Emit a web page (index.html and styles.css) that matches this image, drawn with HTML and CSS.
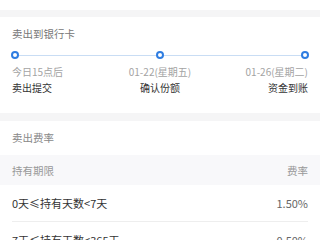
FILE: index.html
```html
<!DOCTYPE html>
<html>

<head>
    <meta name="viewport" content="width=device-width, initial-scale=1.0">
    <link rel="stylesheet" href="styles.css">
</head>

<body>
    <div class="topstrip"></div>

    <div class="card">
        <div class="card-title">卖出到银行卡</div>
        <div class="track">
            <span class="dot"></span>
            <span class="dot"></span>
            <span class="dot"></span>
        </div>
        <div class="steps dates">
            <span>今日15点后</span>
            <span>01-22(星期五)</span>
            <span>01-26(星期二)</span>
        </div>
        <div class="steps names">
            <span>卖出提交</span>
            <span>确认份额</span>
            <span>资金到账</span>
        </div>
    </div>

    <div class="fee">
        <div class="fee-title">卖出费率</div>
        <div class="fee-row fee-head">
            <span>持有期限</span>
            <span>费率</span>
        </div>
        <div class="fee-row">
            <span>0天≤持有天数&lt;7天</span>
            <span class="rate">1.50%</span>
        </div>
        <div class="fee-row">
            <span>7天≤持有天数&lt;365天</span>
            <span class="rate">0.50%</span>
        </div>
    </div>
</body>

</html>
```

FILE: styles.css
```css
* {
    box-sizing: border-box;
}

body {
    margin: 0;
    background-color: #f5f5f6;
    font-family: "Noto Sans CJK SC", "Noto Sans", sans-serif;
    color: #333;
}

.topstrip {
    height: 10px;
    background-color: #fff;
}

.card {
    margin-top: 7px;
    background-color: #fff;
    padding: 0 12px 17px 12px;
}

.card-title {
    height: 34px;
    line-height: 34px;
    font-size: 10.5px;
    color: #777;
}

.track {
    position: relative;
    display: flex;
    justify-content: space-between;
    align-items: center;
    height: 8px;
    margin: 0 -1px 5px -1px;
}

.track::before {
    content: "";
    position: absolute;
    left: 4px;
    right: 4px;
    top: 3.5px;
    height: 1px;
    background-color: #c9ddf4;
}

.dot {
    position: relative;
    width: 8px;
    height: 8px;
    border: 2px solid #2f7de1;
    border-radius: 50%;
    background-color: #fff;
}

.steps {
    display: grid;
    grid-template-columns: 1fr 1fr 1fr;
    height: 16px;
    line-height: 16px;
    font-size: 10px;
    white-space: nowrap;
}

.steps span:nth-child(2) {
    text-align: center;
}

.steps span:nth-child(3) {
    text-align: right;
}

.dates {
    color: #a3a3a3;
}

.names {
    color: #333;
}

.fee {
    margin-top: 8px;
    background-color: #fff;
}

.fee-title {
    height: 34px;
    line-height: 33px;
    padding-left: 12px;
    font-size: 10.5px;
    color: #888;
}

.fee-row {
    display: flex;
    justify-content: space-between;
    align-items: center;
    height: 37px;
    margin: 0 12px;
    border-bottom: 1px solid #eeeeee;
    font-size: 11px;
    color: #333;
}

.fee-head {
    height: 30px;
    margin: 0;
    padding: 0 12px;
    border-bottom: none;
    background-color: #f8f8fa;
    font-size: 10.5px;
    color: #999;
}

.rate {
    color: #666;
}
```
